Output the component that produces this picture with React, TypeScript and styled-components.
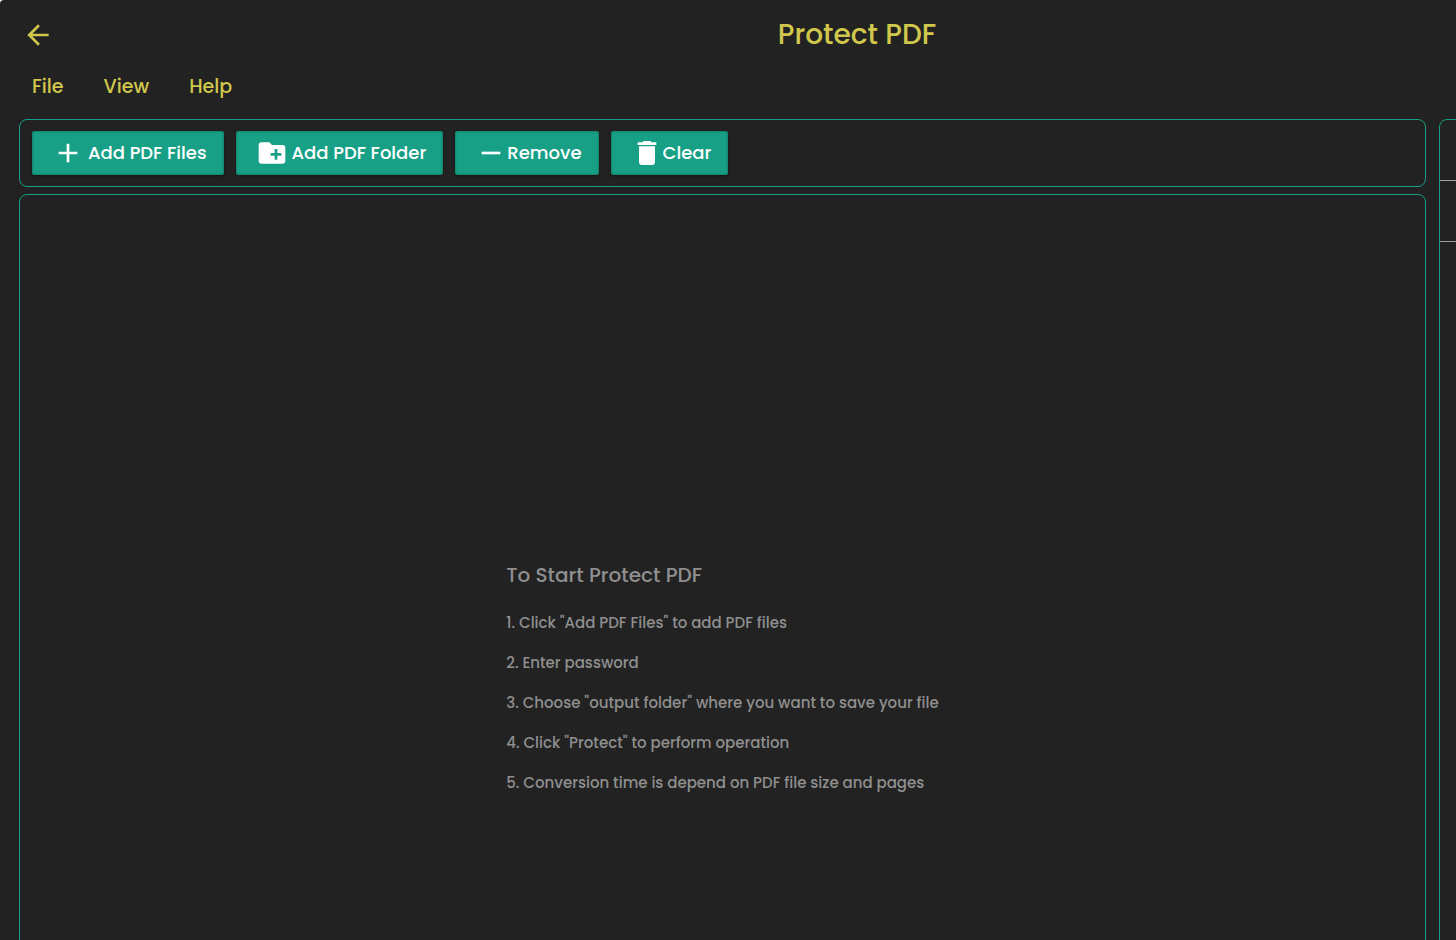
import React from "react";
import styled, { createGlobalStyle } from "styled-components";
import { MdAdd, MdArrowBack, MdCreateNewFolder, MdDelete, MdRemove } from "react-icons/md";

const GlobalStyle = createGlobalStyle`
  *, *::before, *::after { box-sizing: border-box; }
  body {
    margin: 0;
    background: #ffffff;
    font-family: Poppins, Inter, "Liberation Sans", sans-serif;
    font-weight: 500;
  }
  button { font: inherit; cursor: pointer; }
`;

const Viewport = styled.div`
  height: 100vh;
  overflow: hidden;
  border-top-left-radius: 4px;
  background: #222222;
`;

/* The window content is larger than the viewport on both axes. */
const Window = styled.div`
  display: flex;
  flex-direction: column;
  width: calc(100% + 258px);
  min-height: calc(100vh + 239px);
  padding: 0 19px 19px;
`;

const Header = styled.header`
  display: grid;
  grid-template-columns: 38px 1fr 38px;
  align-items: center;
  height: 69px;
`;

const BackButton = styled.button`
  display: flex;
  justify-content: center;
  padding: 0;
  border: 0;
  background: none;
  color: #d1c74c;
`;

const Title = styled.h1`
  margin: 0;
  color: #d1c74c;
  font-size: 28px;
  font-weight: 500;
  line-height: 40px;
  text-align: center;
`;

const MenuBar = styled.nav`
  display: flex;
  gap: 40px;
  height: 50px;
  padding: 4px 13px 0;
`;

const MenuItem = styled.button`
  height: 28px;
  padding: 0;
  border: 0;
  background: none;
  color: #d1c74c;
  font-size: 19px;
  line-height: 28px;
`;

const Workspace = styled.div`
  display: flex;
  flex: 1;
  gap: 13px;
`;

const Main = styled.main`
  display: flex;
  flex: 1;
  flex-direction: column;
  gap: 7px;
`;

const Panel = styled.section`
  border: 1px solid #16a085;
  border-radius: 8px;
`;

const Toolbar = styled(Panel)`
  display: flex;
  gap: 12px;
  padding: 11px 12px;
`;

const ToolButton = styled.button<{ $gap?: number }>`
  display: flex;
  align-items: center;
  gap: ${({ $gap = 0 }) => $gap}px;
  height: 44px;
  padding: 0 17px 0 20px;
  border: 0;
  border-radius: 3px;
  background: #18a086;
  box-shadow: inset 0 0 2px 1px #14836d, 0 1px 3px rgba(0, 0, 0, 0.4);
  color: #ffffff;
  font-size: 18px;
  line-height: 28px;
  white-space: nowrap;
`;

const DropArea = styled(Panel)`
  display: flex;
  flex: 1;
  align-items: center;
  justify-content: center;
`;

const Guide = styled.div`
  color: #8f8f8f;
`;

const GuideTitle = styled.h2`
  margin: 0 0 20px;
  font-size: 20px;
  font-weight: 500;
  line-height: 32px;
`;

const Steps = styled.ol`
  display: flex;
  flex-direction: column;
  gap: 16px;
  margin: 0;
  padding: 0;
  list-style: none;
`;

const Step = styled.li`
  font-size: 15px;
  line-height: 24px;
`;

const SidePanel = styled(Panel).attrs({ as: "aside" })`
  flex: none;
  width: 256px;
`;

const SideRow = styled.div`
  height: 61px;
  border-bottom: 1px solid #a0a0a0;
`;

const steps = [
  '1. Click "Add PDF Files" to add PDF files',
  "2. Enter password",
  '3. Choose "output folder" where you want to save your file',
  '4. Click "Protect" to perform operation',
  "5. Conversion time is depend on PDF file size and pages",
];

export default function App() {
  return (
    <Viewport>
      <GlobalStyle />
      <Window>
        <Header>
          <BackButton aria-label="Back"><MdArrowBack size={32} /></BackButton>
          <Title>Protect PDF</Title>
        </Header>
        <MenuBar>
          <MenuItem>File</MenuItem>
          <MenuItem>View</MenuItem>
          <MenuItem>Help</MenuItem>
        </MenuBar>
        <Workspace>
          <Main>
            <Toolbar>
              <ToolButton $gap={4}><MdAdd size={32} />Add PDF Files</ToolButton>
              <ToolButton $gap={4}><MdCreateNewFolder size={32} />Add PDF Folder</ToolButton>
              <ToolButton><MdRemove size={32} />Remove</ToolButton>
              <ToolButton><MdDelete size={32} />Clear</ToolButton>
            </Toolbar>
            <DropArea>
              <Guide>
                <GuideTitle>To Start Protect PDF</GuideTitle>
                <Steps>
                  {steps.map((step) => (
                    <Step key={step}>{step}</Step>
                  ))}
                </Steps>
              </Guide>
            </DropArea>
          </Main>
          <SidePanel>
            <SideRow />
            <SideRow />
          </SidePanel>
        </Workspace>
      </Window>
    </Viewport>
  );
}
